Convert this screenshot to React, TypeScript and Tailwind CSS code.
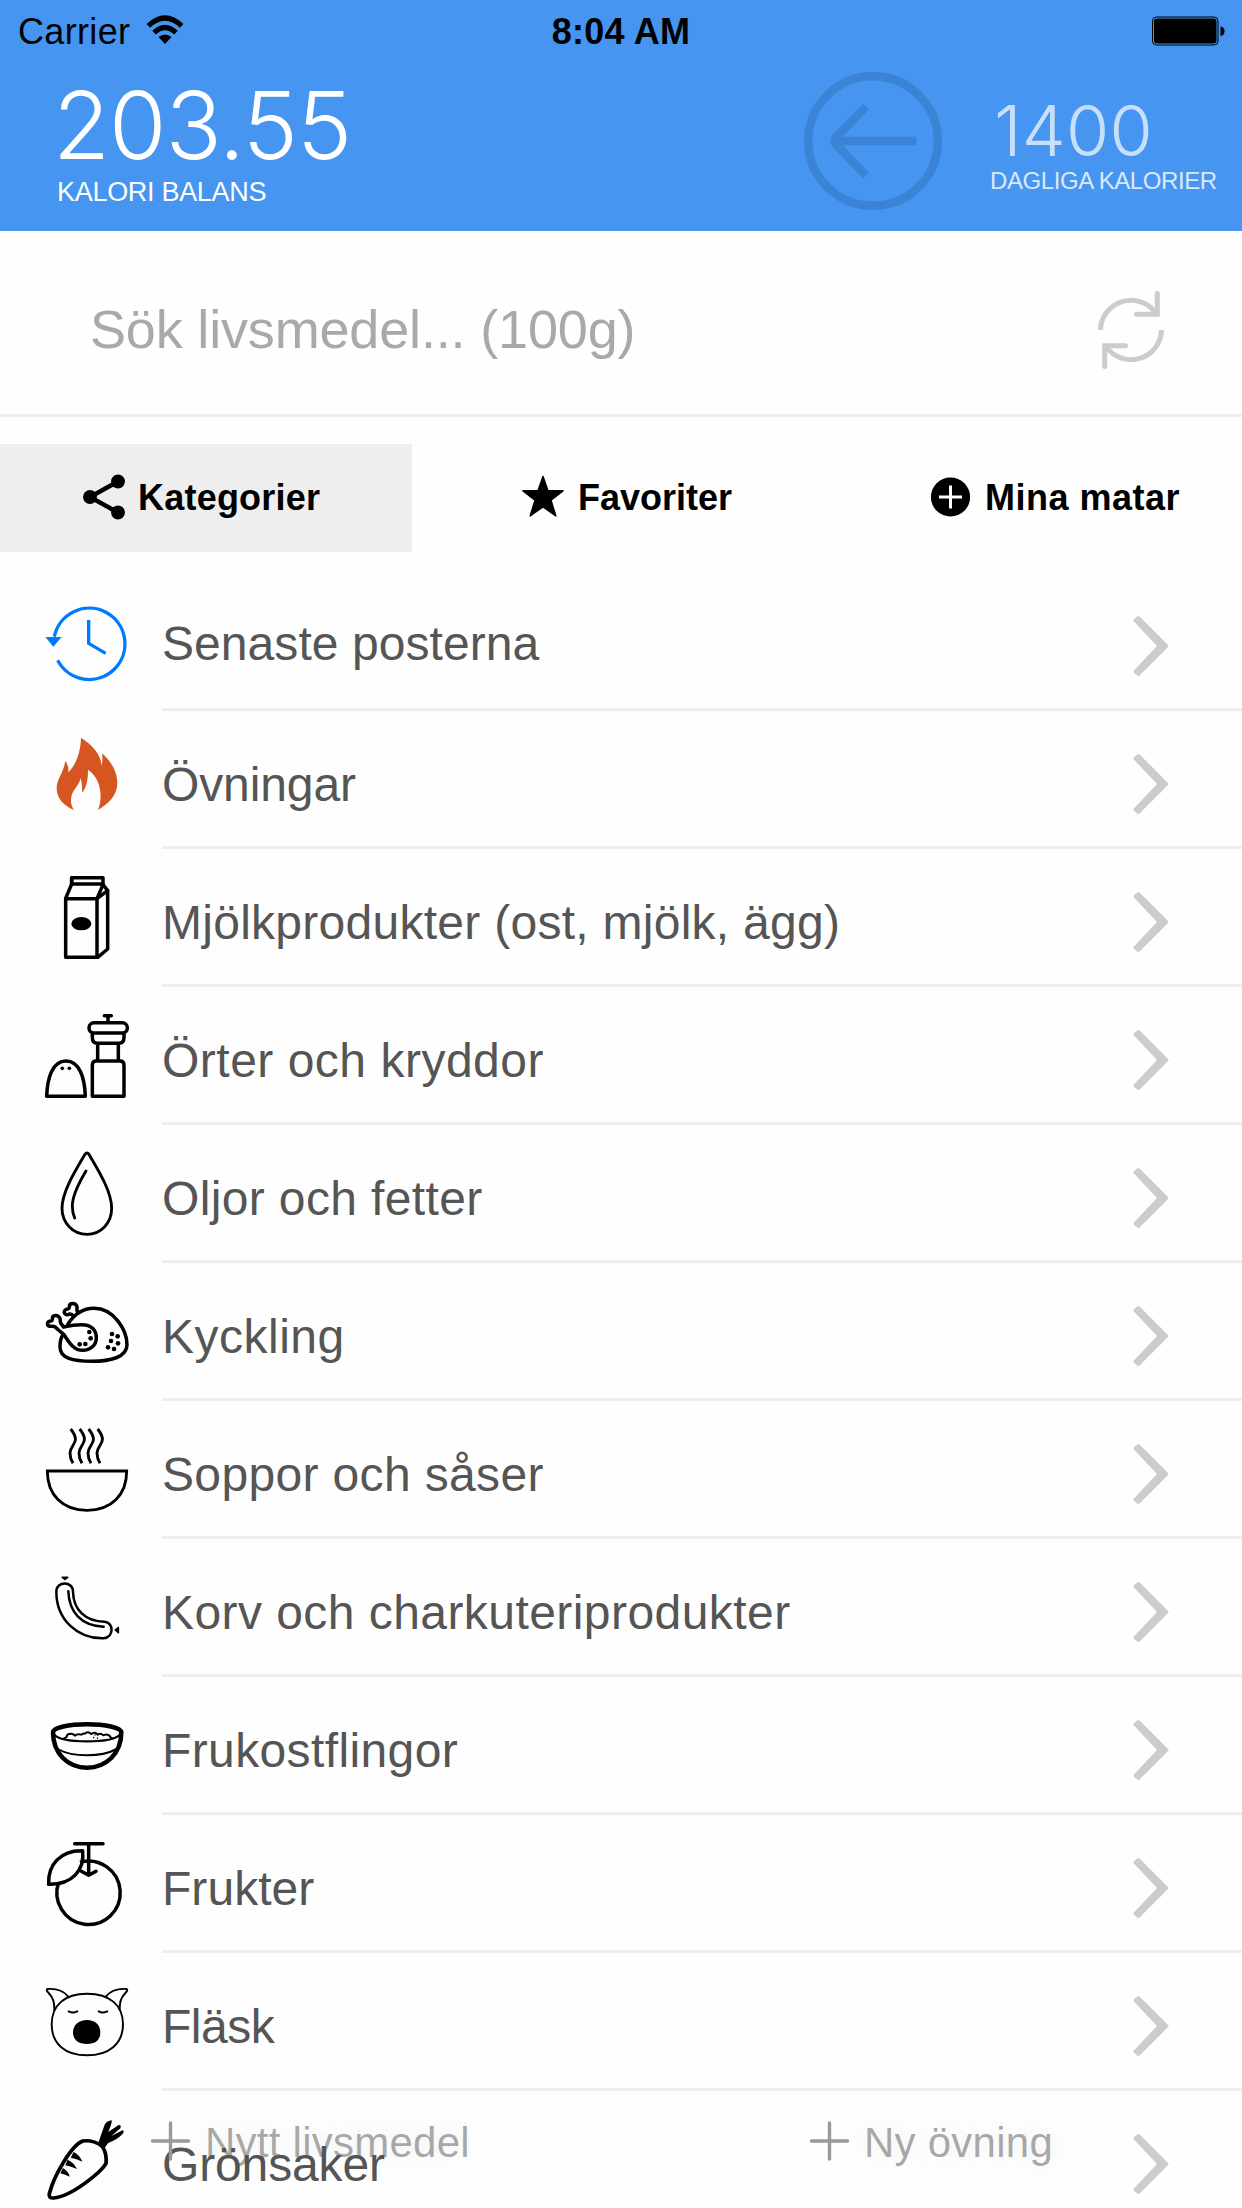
import React from "react";

type Row = { label: string; tracking: string; icon: React.ReactNode; lift?: boolean };

/* Each icon shares a 486x414 cell, three units per pixel. */
function Cell({ y, children }: { y: number; children: React.ReactNode }) {
  return (
    <svg
      viewBox={`0 ${y} 486 414`}
      className="h-[138px] w-[162px] shrink-0 self-start"
      fill="none"
      stroke="#000"
      strokeWidth="10.5"
      strokeLinecap="round"
      strokeLinejoin="round"
    >
      {children}
    </svg>
  );
}

const ClockIcon = (
  <Cell y={-21}>
    <g stroke="#007aff" strokeWidth="10" strokeLinecap="butt" strokeLinejoin="miter">
      <path d="M163 170A107 107 0 1 1 173 241" />
      <path d="M266 120V190L317 220" />
      <path d="M136 171H185L160 200Z" fill="#007aff" stroke="none" />
    </g>
  </Cell>
);

const FlameIcon = (
  <Cell y={393}>
    <path
      fill="#d55621"
      stroke="none"
      d="M243 473C281 498 304 526 304 557C308 545 308 533 306 520C334 545 352 575 352 609C352 646 326 671 294 690C308 655 306 598 264 569C264 600 260 622 246 638C247 622 246 609 242 595C236 622 213 630 213 662C213 673 217 682 222 690C190 677 170 655 170 625C170 597 190 581 196 542C204 555 206 565 205 577C226 556 242 520 243 473Z"
    />
  </Cell>
);

const MilkIcon = (
  <Cell y={807}>
    <path d="M215 893H309V914L323 932V1107L293 1132H197V955L215 912Z" />
    <path d="M215 893V912H309M197 956H291L309 914M291 956V1132M291 956L323 932" />
    <ellipse cx="244" cy="1031" rx="30" ry="20" fill="#000" stroke="none" />
  </Cell>
);

const SpiceIcon = (
  <Cell y={21}>
    <path d="M140 349H256C254 294 239 243 198 243S142 294 140 349Z" />
    <rect x="267" y="128" width="115" height="31" rx="15" />
    <path d="M277 160V172Q277 190 292 190H357Q372 190 372 172V160M293 192V241M355 192V241M313 107H334M324 107V127" />
    <path d="M277 349V255Q277 243 289 243H360Q372 243 372 255V349Z" />
    <circle cx="187" cy="265" r="5.5" fill="#000" stroke="none" />
    <circle cx="208" cy="265" r="5.5" fill="#000" stroke="none" />
  </Cell>
);

const DropIcon = (
  <Cell y={435}>
    <path d="M255 523Q261 515 267 523C299 577 335 637 335 685C335 730 302 763 261 763S186 730 186 685C186 637 223 577 255 523Z" strokeWidth="8.6" />
    <path d="M258 573C231 618 217 649 217 678Q217 698 224 714" strokeWidth="8.6" />
  </Cell>
);

const ChickenIcon = (
  <Cell y={9}>
    <path d="M203 194C219 168 245 145 282 145C342 145 381 211 381 254C381 292 330 304 276 304C219 304 180 295 180 261C180 247 181 238 187 227" />
    <path d="M190 201C212 196 226 194 245 194C276 194 289 212 289 234C289 255 271 271 248 271C220 271 206 245 192 224L172 207" />
    <path d="M172 207C162 194 157 200 149 199C139 196 141 183 153 183C157 182 158 181 157 176C157 164 174 163 180 175C182 184 177 187 190 199" />
    <path d="M206 163C192 168 188 152 199 148C206 147 208 147 208 140C208 127 227 127 231 140C232 148 227 153 236 157" />
    <path d="M206 163Q215 160 219 168" />
    <g fill="#000" stroke="none">
      <circle cx="268" cy="216" r="7" /><circle cx="272" cy="235" r="7" /><circle cx="256" cy="252" r="7" /><circle cx="239" cy="253" r="7" />
      <circle cx="336" cy="222" r="7" /><circle cx="353" cy="229" r="7" /><circle cx="333" cy="243" r="7" /><circle cx="354" cy="250" r="7" />
      <circle cx="324" cy="262" r="7" /><circle cx="342" cy="267" r="7" />
    </g>
  </Cell>
);

const SoupIcon = (
  <Cell y={423}>
    <g strokeWidth="8.6" strokeLinejoin="miter" strokeLinecap="butt">
      <path d="M142 633H380C380 704 335 751 261 751S142 704 142 633Z" />
      <path d="M212 507C245 549 211 551 210 579Q210 595 219 610M239 507C272 549 238 551 237 579Q237 595 246 610M266 507C299 549 265 551 264 579Q264 595 273 610M293 507C326 549 292 551 291 579Q291 595 300 610" />
    </g>
  </Cell>
);

const SausageIcon = (
  <Cell y={27}>
    <g strokeWidth="7.5">
      <path d="M169 185C169 152 219 152 219 185C220 239 256 275 314 275C342 277 342 322 311 325C234 327 169 270 169 185Z" />
      <path d="M205 184C207 245 243 288 311 290" />
      <path d="M187 142L195 148L203 142ZM355 293L346 300L355 308Z" fill="#000" strokeWidth="5" />
    </g>
  </Cell>
);

const CerealIcon = (
  <Cell y={441}>
    <path d="M159 607C160 592 207 583 261 583S363 592 364 607C364 671 318 713 261 713S159 671 159 607Z" strokeWidth="13.5" />
    <path d="M162 613C174 629 214 634 261 634S348 629 360 613" strokeWidth="7" />
    <path d="M173 657C198 671 226 676 261 676S324 671 350 657" strokeWidth="6" />
    <path d="M190 626Q196 624 200 621Q200 611 213 611Q220 611 225 617Q231 610 244 614Q249 610 255 611Q263 602 274 612Q286 603 293 614Q302 608 310 616Q324 610 331 620Q332 626 338 625" strokeWidth="6" />
    <path d="M281 622V623M292 624V625M285 614V615" strokeWidth="4" />
  </Cell>
);

const FruitIcon = (
  <Cell y={45}>
    <path d="M240 187A95 95 0 1 1 176 247" strokeLinecap="butt" />
    <path d="M248 152C254 210 218 254 146 253C143 194 182 150 248 152Z" />
    <path d="M224 131H309M266 131V226M244 214L266 226L288 214" />
  </Cell>
);

const PigIcon = (
  <Cell y={459}>
    <g strokeWidth="5.8">
      <path d="M261 581C330 581 369 616 369 673C369 732 326 766 261 766S155 732 155 673C155 616 194 581 261 581Z" />
      <path d="M204 589C190 572 168 565 142 567Q137 571 146 579C162 596 163 610 163 630" />
      <path d="M318 589C332 572 354 565 380 567Q385 571 376 579C360 596 359 610 359 630" />
      <path d="M206 634Q218 641 232 634M296 634Q308 641 322 634" />
    </g>
    <path d="M261 660C286 660 301 676 301 697C301 722 285 732 261 732S219 722 219 697C219 676 236 660 261 660Z" fill="#000" stroke="none" />
  </Cell>
);

const CarrotIcon = (
  <Cell y={63}>
    <g transform="scale(1.0714 1)">
      <path d="M232 213C250 209 277 217 288 232Q299 250 297 280C286 303 203 379 150 384Q136 385 138 372C150 319 200 225 232 213Z" />
      <path d="M276 216L293 164Q300 152 313 151Q314 160 303 186L332 165Q341 165 337 175L312 198L343 181Q348 180 345 190Q331 208 303 219L291 236Z" fill="#000" stroke="none" />
      <path d="M206 246Q222 254 231 275Q214 266 198 263ZM189 269Q208 278 215 297Q199 290 183 286ZM176 294Q192 303 195 320Q183 314 169 310Z" fill="#000" stroke="none" />
    </g>
  </Cell>
);

const rows: Row[] = [
  { label: "Senaste posterna", tracking: "tracking-[0.06px]", icon: ClockIcon, lift: true },
  { label: "Övningar", tracking: "tracking-[-0.11px]", icon: FlameIcon },
  { label: "Mjölkprodukter (ost, mjölk, ägg)", tracking: "tracking-[0.27px]", icon: MilkIcon },
  { label: "Örter och kryddor", tracking: "tracking-[0.5px]", icon: SpiceIcon },
  { label: "Oljor och fetter", tracking: "tracking-[0.36px]", icon: DropIcon },
  { label: "Kyckling", tracking: "tracking-[0.49px]", icon: ChickenIcon },
  { label: "Soppor och såser", tracking: "tracking-[0.35px]", icon: SoupIcon },
  { label: "Korv och charkuteriprodukter", tracking: "tracking-[0.44px]", icon: SausageIcon },
  { label: "Frukostflingor", tracking: "tracking-[0.38px]", icon: CerealIcon },
  { label: "Frukter", tracking: "tracking-[0.05px]", icon: FruitIcon },
  { label: "Fläsk", tracking: "tracking-[-0.5px]", icon: PigIcon },
  { label: "Grönsaker", tracking: "tracking-[-0.14px]", icon: CarrotIcon },
];

function CategoryRow({ label, tracking, icon, lift }: Row) {
  return (
    <li className="flex h-[138px] shrink-0">
      {icon}
      <div className="flex flex-1 items-center justify-between border-b-3 border-[#eeeeee] pt-3 pr-[72px]">
        <span className={`text-[48px] leading-[54px] whitespace-nowrap text-[#555555] ${tracking} ${lift ? "pb-1.5" : ""}`}>
          {label}
        </span>
        <svg viewBox="0 0 38 62" className="-mt-0.5 h-[62px] w-[38px]" fill="#cccccc" stroke="#cccccc" strokeWidth="3" strokeLinejoin="round">
          <path d="M3 5.5L6.5 2.5L35 31L6.5 59.5L3 56.5L27 31Z" />
        </svg>
      </div>
    </li>
  );
}

function StatusBar() {
  return (
    <div className="grid h-[63px] grid-cols-3 items-center text-[36px] leading-none text-black">
      <div className="flex items-center pl-[18px]">
        <span className="tracking-[0.33px]">Carrier</span>
        <svg viewBox="0 0 38 32" className="-mt-1 ml-4 h-8 w-[38px]" fill="none" stroke="#000" strokeWidth="5.2">
          <path d="M2.3 11.8Q19 -4 35.7 11.8M8 18.6Q19 8.2 30 18.6" />
          <path d="M12.5 23Q19 18 25.5 23L19 30Z" fill="#000" stroke="none" />
        </svg>
      </div>
      <div className="text-center font-bold tracking-[0.24px]">8:04 AM</div>
      <div className="flex items-center justify-end pr-[17px]">
        <svg viewBox="0 0 74 30" className="-mt-0.5 h-[30px] w-[74px]">
          <rect x="1.5" y="1" width="65.5" height="28" rx="4" fill="none" stroke="#000" strokeWidth="1" />
          <rect x="3" y="2.5" width="62.5" height="25" rx="3" fill="#000" />
          <path d="M69.5 10.5Q73.5 11 73.5 15.2T69.5 20Z" fill="#000" />
        </svg>
      </div>
    </div>
  );
}

function Header() {
  return (
    <header className="h-[231px] shrink-0 bg-[#4595f1] text-white">
      <StatusBar />
      <div className="flex items-start">
        <div className="w-[804px] pt-4">
          <div className="pl-[53px] font-[Inter] text-[93px] leading-[92px] font-light tracking-[-0.98px]">203.55</div>
          <div className="mt-[7px] pl-[57px] text-[27px] leading-7 tracking-[-0.3px]">KALORI BALANS</div>
        </div>
        <svg viewBox="0 0 138 138" className="mt-[9px] h-[138px] w-[138px]" fill="none" stroke="#3b83d4" strokeWidth="8.4">
          <circle cx="69" cy="69" r="64.8" />
          <path d="M112.5 69H34M62 34.5L31.5 66Q29.5 69 31.5 72L62 103.5" />
        </svg>
        <div className="pt-[33px] pl-12">
          <div className="pl-1 font-[Inter] text-[70px] leading-[70px] font-light tracking-[0.2px] opacity-70">1400</div>
          <div className="mt-[3px] text-[24px] leading-6 tracking-[-0.42px] whitespace-nowrap opacity-80">DAGLIGA KALORIER</div>
        </div>
      </div>
    </header>
  );
}

function SearchBar() {
  return (
    <div className="flex h-[186px] shrink-0 items-center justify-between border-b-3 border-[#eeeeee] pt-3.5 pr-[76px] pl-[90px]">
      <span className="pb-0.5 text-[54px] leading-[60px] tracking-[-0.17px] text-[#a9a9a9]">Sök livsmedel... (100g)</span>
      <svg viewBox="0 0 70 80" className="h-20 w-[70px]" fill="none" stroke="#cccccc" strokeWidth="5">
        <path d="M4.5 40A30.5 30.5 0 0 1 59 22M65.5 40A30.5 30.5 0 0 1 11 58" />
        <path d="M61.3 3.5V24.3H40.5M8.7 76.5V55.7H29.5" strokeLinecap="round" />
      </svg>
    </div>
  );
}

function Tabs() {
  return (
    <nav className="mt-[27px] flex h-[108px] shrink-0 text-[36px] leading-10 font-bold text-black">
      <div className="flex w-[412px] items-center bg-[#eeeeee] pl-[82px]">
        <svg viewBox="0 0 44 46" className="-mt-0.5 h-[46px] w-11" stroke="#000" strokeWidth="4.5">
          <path d="M36 7.5L8 23L36 38.5" fill="none" />
          <circle cx="8" cy="23" r="4.7" />
          <circle cx="36" cy="7.5" r="4.7" />
          <circle cx="36" cy="38.5" r="4.7" />
        </svg>
        <span className="ml-3 tracking-[0.22px]">Kategorier</span>
      </div>
      <div className="flex w-[415px] items-center pl-[110px]">
        <svg viewBox="0 0 42 42" className="-mt-1 h-[42px] w-[42px]" stroke="#000" strokeWidth="1.5" strokeLinejoin="round">
          <path d="M21 1.5L26 15.8H41L29 25.2L33.8 41L21 31.8L8.2 41L13 25.2L1 15.8H16Z" />
        </svg>
        <span className="ml-3.5">Favoriter</span>
      </div>
      <div className="flex w-[415px] items-center pl-[103px]">
        <svg viewBox="0 0 40 40" className="-mt-0.5 h-10 w-10">
          <circle cx="20.5" cy="20" r="19.6" />
          <path d="M9 20H32M20.5 8.5V31.5" stroke="#fff" strokeWidth="3" />
        </svg>
        <span className="ml-[15px] tracking-[0.5px]">Mina matar</span>
      </div>
    </nav>
  );
}

function ActionButton({ label }: { label: string }) {
  return (
    <button className="flex items-center gap-3.5 text-[42px] leading-[46px] tracking-[0.25px] text-[#555555]/50 [text-shadow:0_0_30px_rgba(0,0,0,0.1)]">
      <svg viewBox="0 0 40 40" className="-mt-1 h-10 w-10" stroke="#999999" strokeWidth="3.4" strokeLinecap="round">
        <path d="M1.5 20H37.5M19.5 2V38" />
      </svg>
      <span>{label}</span>
    </button>
  );
}

export default function App() {
  return (
    <div className="relative flex h-[2208px] w-[1242px] flex-col overflow-hidden bg-[#fefefe] font-['Liberation_Sans',Arial,sans-serif]">
      <Header />
      <SearchBar />
      <Tabs />
      <ul className="mt-[21px] flex flex-col">
        {rows.map((row) => (
          <CategoryRow key={row.label} {...row} />
        ))}
      </ul>
      <div className="absolute inset-x-0 bottom-0 flex h-[88px] items-start pl-[151px]">
        <div className="w-[659px]">
          <ActionButton label="Nytt livsmedel" />
        </div>
        <ActionButton label="Ny övning" />
      </div>
    </div>
  );
}
